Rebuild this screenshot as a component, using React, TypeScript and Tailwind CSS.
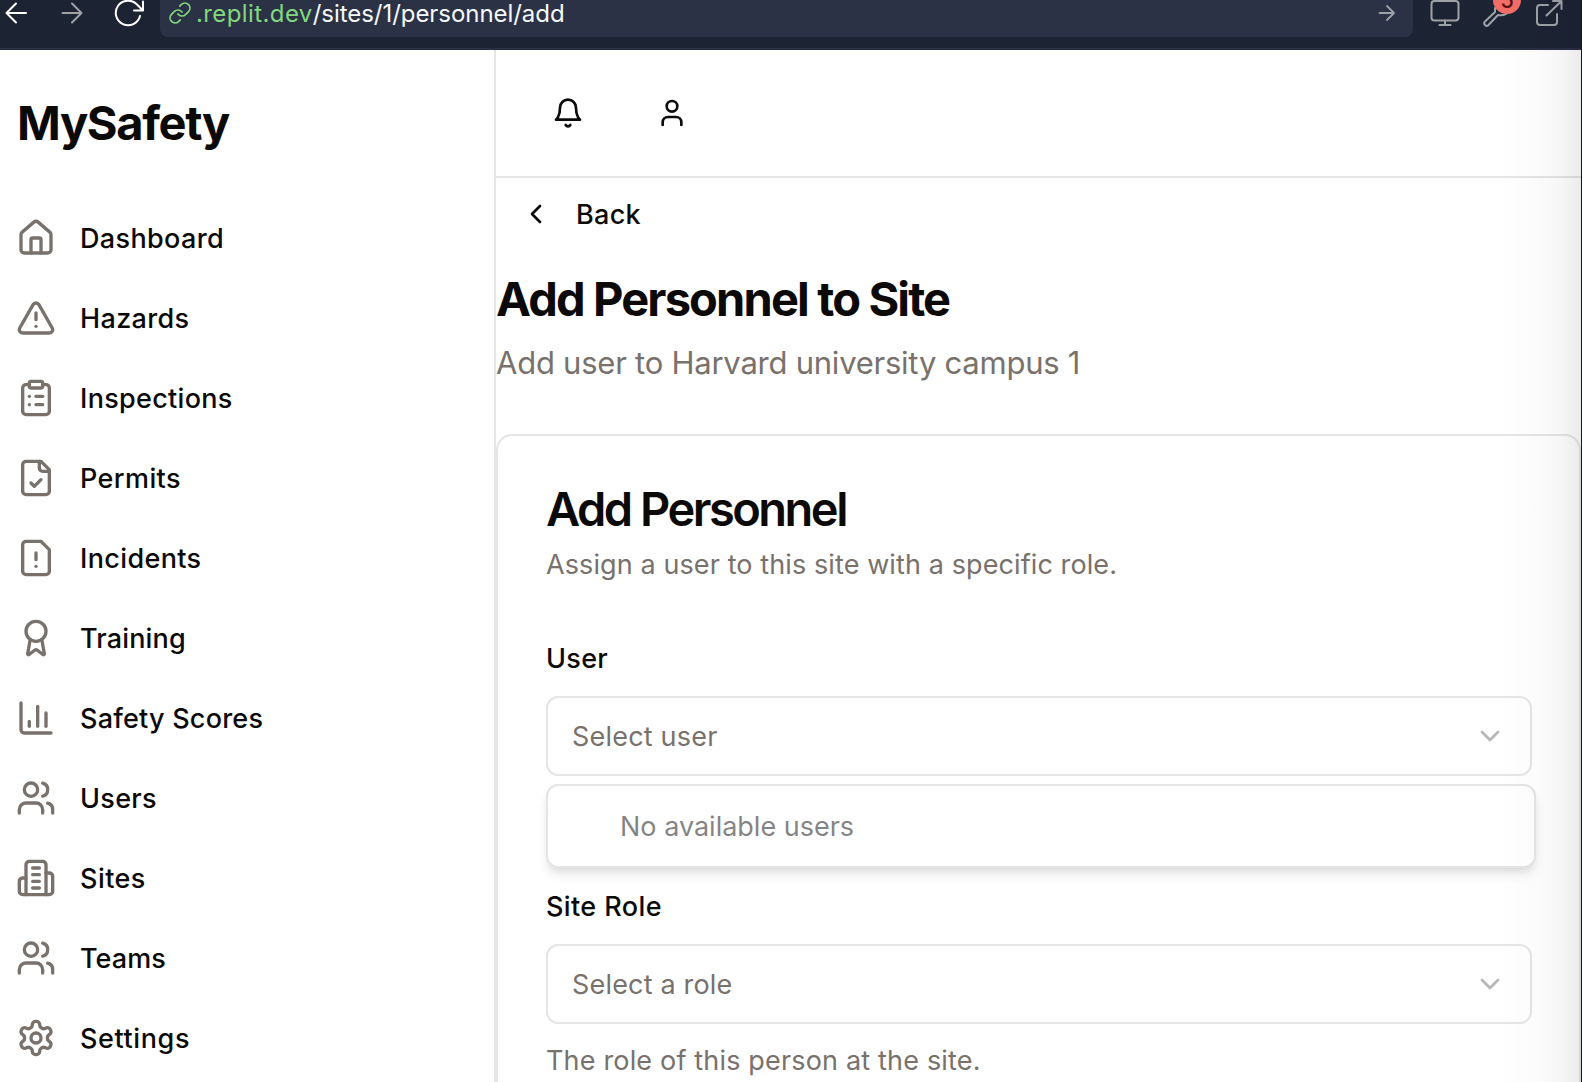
import React from "react";

type IconProps = { className?: string; strokeWidth?: number; children: React.ReactNode };

function Icon({ className, strokeWidth = 2, children }: IconProps) {
  return (
    <svg viewBox="0 0 24 24" fill="none" stroke="currentColor" strokeWidth={strokeWidth} strokeLinecap="round" strokeLinejoin="round" className={className}>
      {children}
    </svg>
  );
}

const usersIcon = (
  <>
    <path d="M16 21v-2a4 4 0 0 0-4-4H6a4 4 0 0 0-4 4v2" />
    <circle cx="9" cy="7" r="4" />
    <path d="M22 21v-2a4 4 0 0 0-3-3.87" />
    <path d="M16 3.13a4 4 0 0 1 0 7.75" />
  </>
);

const navItems = [
  {
    label: "Dashboard",
    text: "tracking-[0.35px]",
    icon: (
      <>
        <path d="M15 21v-8a1 1 0 0 0-1-1h-4a1 1 0 0 0-1 1v8" />
        <path d="M3 10a2 2 0 0 1 .709-1.528l7-5.999a2 2 0 0 1 2.582 0l7 5.999A2 2 0 0 1 21 10v9a2 2 0 0 1-2 2H5a2 2 0 0 1-2-2z" />
      </>
    ),
  },
  {
    label: "Hazards",
    text: "tracking-[0.35px]",
    icon: (
      <>
        <path d="m21.73 18-8-14a2 2 0 0 0-3.48 0l-8 14A2 2 0 0 0 4 21h16a2 2 0 0 0 1.73-3" />
        <path d="M12 9v4" />
        <path d="M12 17h.01" />
      </>
    ),
  },
  {
    label: "Inspections",
    text: "tracking-[0.3px]",
    icon: (
      <>
        <rect width="8" height="4" x="8" y="2" rx="1" ry="1" />
        <path d="M16 4h2a2 2 0 0 1 2 2v14a2 2 0 0 1-2 2H6a2 2 0 0 1-2-2V6a2 2 0 0 1 2-2h2" />
        <path d="M12 11h4" />
        <path d="M12 16h4" />
        <path d="M8 11h.01" />
        <path d="M8 16h.01" />
      </>
    ),
  },
  {
    label: "Permits",
    text: "tracking-[0.4px]",
    icon: (
      <>
        <path d="M15 2H6a2 2 0 0 0-2 2v16a2 2 0 0 0 2 2h12a2 2 0 0 0 2-2V7Z" />
        <path d="M14 2v4a2 2 0 0 0 2 2h4" />
        <path d="m9 15 2 2 4-4" />
      </>
    ),
  },
  {
    label: "Incidents",
    text: "tracking-[0.35px]",
    icon: (
      <>
        <path d="M15 2H6a2 2 0 0 0-2 2v16a2 2 0 0 0 2 2h12a2 2 0 0 0 2-2V7Z" />
        <path d="M12 9v4" />
        <path d="M12 17h.01" />
      </>
    ),
  },
  {
    label: "Training",
    text: "tracking-[0.15px]",
    icon: (
      <>
        <path d="m15.477 12.89 1.515 8.526a.5.5 0 0 1-.81.47l-3.58-2.687a1 1 0 0 0-1.197 0l-3.586 2.686a.5.5 0 0 1-.81-.469l1.514-8.526" />
        <circle cx="12" cy="8" r="6" />
      </>
    ),
  },
  {
    label: "Safety Scores",
    text: "tracking-[0.22px]",
    icon: (
      <>
        <path d="M3 3v16a2 2 0 0 0 2 2h16" />
        <path d="M18 17V9" />
        <path d="M13 17V5" />
        <path d="M8 17v-3" />
      </>
    ),
  },
  { label: "Users", text: "tracking-[0.3px]", icon: usersIcon },
  {
    label: "Sites",
    text: "tracking-[0.45px]",
    icon: (
      <>
        <path d="M6 22V4a2 2 0 0 1 2-2h8a2 2 0 0 1 2 2v18Z" />
        <path d="M6 12H4a2 2 0 0 0-2 2v6a2 2 0 0 0 2 2h2" />
        <path d="M18 9h2a2 2 0 0 1 2 2v9a2 2 0 0 1-2 2h-2" />
        <path d="M10 6h4" />
        <path d="M10 10h4" />
        <path d="M10 14h4" />
        <path d="M10 18h4" />
      </>
    ),
  },
  { label: "Teams", text: "tracking-[0.1px]", icon: usersIcon },
  {
    label: "Settings",
    text: "tracking-[0.6px]",
    icon: (
      <>
        <path d="M12.22 2h-.44a2 2 0 0 0-2 2v.18a2 2 0 0 1-1 1.73l-.43.25a2 2 0 0 1-2 0l-.15-.08a2 2 0 0 0-2.73.73l-.22.38a2 2 0 0 0 .73 2.73l.15.1a2 2 0 0 1 1 1.72v.51a2 2 0 0 1-1 1.74l-.15.09a2 2 0 0 0-.73 2.73l.22.38a2 2 0 0 0 2.73.73l.15-.08a2 2 0 0 1 2 0l.43.25a2 2 0 0 1 1 1.73V20a2 2 0 0 0 2 2h.44a2 2 0 0 0 2-2v-.18a2 2 0 0 1 1-1.73l.43-.25a2 2 0 0 1 2 0l.15.08a2 2 0 0 0 2.73-.73l.22-.39a2 2 0 0 0-.73-2.73l-.15-.08a2 2 0 0 1-1-1.74v-.5a2 2 0 0 1 1-1.74l.15-.09a2 2 0 0 0 .73-2.73l-.22-.38a2 2 0 0 0-2.73-.73l-.15.08a2 2 0 0 1-2 0l-.43-.25a2 2 0 0 1-1-1.73V4a2 2 0 0 0-2-2z" />
        <circle cx="12" cy="12" r="3" />
      </>
    ),
  },
];

function BrowserBar() {
  return (
    <div className="relative flex h-[50px] shrink-0 overflow-hidden border-b-2 border-[#2b2d42] bg-[#1c2333]">
      <svg className="h-[48px] w-[160px] shrink-0" viewBox="0 0 160 48" fill="none" strokeWidth="2" strokeLinecap="round" strokeLinejoin="round">
        <path d="M26 13H6.500M16 3.500L6.500 13l9.500 9.500" stroke="#fff" />
        <path d="M62.500 13H81.500M72 3.500L81.500 13L72 22.500" stroke="#a0a2a8" />
        <path d="M140 16A12.300 12.300 0 1 1 137 4.500L143 10.500M143 1.500V10.500H134" stroke="#fff" />
      </svg>
      <div className="flex h-[37px] w-[1253px] items-start rounded-b-lg bg-[#2b3245]">
        <svg className="ml-[8px] mt-[1px] h-[24px] w-[24px] shrink-0" viewBox="0 0 24 24" fill="none" stroke="#83d77f" strokeWidth="1.700" strokeLinecap="round" strokeLinejoin="round">
          <path d="M10 13a5 5 0 0 0 7.540.540l3-3a5 5 0 0 0-7.070-7.070l-1.720 1.710" />
          <path d="M14 11a5 5 0 0 0-7.540-.540l-3 3a5 5 0 0 0 7.070 7.070l1.710-1.710" />
        </svg>
        <div className="ml-[4px] mt-[-2px] flex-1 whitespace-nowrap text-[24px] leading-8 tracking-[-0.05px] text-[#f5f9fc]">
          <span className="tracking-[0.4px] text-[#83d77f]">.replit.dev</span>/sites/1/personnel/add
        </div>
        <svg className="mr-[17px] mt-[4px] h-[18px] w-[18px]" viewBox="0 0 18 18" fill="none" stroke="#9da2a6" strokeWidth="1.800" strokeLinecap="round" strokeLinejoin="round">
          <path d="M1.500 9H16M9 2L16 9L9 16" />
        </svg>
      </div>
      <svg className="h-[48px] w-[168px] shrink-0" viewBox="1413 0 168 48" fill="none" stroke="#9da2a6" strokeWidth="2" strokeLinecap="round" strokeLinejoin="round">
        <rect x="1431.500" y="1" width="27" height="19.500" rx="3" />
        <path d="M1445 20.500V25M1439.500 25H1450.500" />
        <path d="M1495 8V12L1485 21.500A2 2 0 0 0 1488.500 25L1498 15C1503 16 1507 14 1509 11" />
        <path d="M1548 5H1540A3 3 0 0 0 1537 8V22A3 3 0 0 0 1540 25H1554A3 3 0 0 0 1557 22V14M1546.500 15.500L1561 1.500M1553 1H1561.500V9" />
      </svg>
      <div className="absolute left-[1493px] top-[-14px] flex h-[28px] w-[28px] items-center justify-center rounded-full bg-[#f26d68] text-[22px] font-medium leading-none text-[#5c0f0d]">5</div>
    </div>
  );
}

function SelectBox({ text, className }: { text: string; className: string }) {
  return (
    <div className="flex h-20 w-[986px] items-center justify-between rounded-[12px] border-2 border-[#e5e5e5] px-6">
      <span className={className}>{text}</span>
      <Icon className="h-8 w-8 text-[#78716c] opacity-50">
        <path d="m6 9 6 6 6-6" />
      </Icon>
    </div>
  );
}

export default function App() {
  return (
    <div className="relative flex h-[1082px] w-[1582px] flex-col overflow-hidden bg-white font-['Inter',sans-serif] text-[#0c0a09]">
      <BrowserBar />
      <div className="flex min-h-0 flex-1">
        <aside className="w-[496px] shrink-0 border-r-2 border-[#e5e5e5]">
          <div className="flex h-[148px] items-center pb-[3px] pl-[17px]">
            <h1 className="text-[47px] font-bold leading-none tracking-[-1.35px]">MySafety</h1>
          </div>
          <nav>
            {navItems.map((item) => (
              <a key={item.label} className="flex h-20 items-center gap-6 pl-4">
                <Icon className="h-10 w-10 shrink-0 text-[#78716c]">{item.icon}</Icon>
                <span className={`pt-[2px] text-[27px] font-medium leading-10 ${item.text}`}>{item.label}</span>
              </a>
            ))}
          </nav>
        </aside>

        <main className="flex w-[1086px] flex-col">
          <header className="flex h-[128px] shrink-0 items-center gap-6 border-b-2 border-[#e5e5e5] pl-8">
            <div className="flex h-20 w-20 items-center justify-center">
              <Icon className="h-8 w-8">
                <path d="M6 8a6 6 0 0 1 12 0c0 7 3 9 3 9H3s3-2 3-9" />
                <path d="M10.300 21a1.940 1.940 0 0 0 3.400 0" />
              </Icon>
            </div>
            <div className="flex h-20 w-20 items-center justify-center">
              <Icon className="h-8 w-8">
                <path d="M19 21v-2a4 4 0 0 0-4-4H9a4 4 0 0 0-4 4v2" />
                <circle cx="12" cy="7" r="4" />
              </Icon>
            </div>
          </header>

          <div className="flex h-[72px] shrink-0 items-center gap-6 pl-6">
            <Icon className="h-8 w-8">
              <path d="m15 18-6-6 6-6" />
            </Icon>
            <span className="pt-[2px] text-[27px] font-medium leading-10 tracking-[0.3px]">Back</span>
          </div>

          <div className="h-[184px] shrink-0 pt-[21px]">
            <h2 className="text-[47px] font-bold leading-[56px] tracking-[-1.85px]">Add Personnel to Site</h2>
            <p className="mt-[12px] text-[31px] leading-[48px] tracking-[-0.24px] text-[#78716c]">Add user to Harvard university campus 1</p>
          </div>

          <section className="h-[760px] w-[1085px] shrink-0 rounded-[16px] border-2 border-[#e5e5e5] pl-12">
            <h3 className="mt-[49px] text-[47px] font-semibold leading-[48px] tracking-[-2.5px]">Add Personnel</h3>
            <p className="mt-[12px] text-[27px] leading-10 tracking-[0.1px] text-[#78716c]">Assign a user to this site with a specific role.</p>
            <label className="mt-[60px] block text-[27px] font-medium leading-[28px] tracking-[0.3px]">User</label>
            <div className="relative mt-[23px]">
              <SelectBox text="Select user" className="pt-[2px] text-[27px] leading-10 tracking-[0.2px] text-[#78716c]" />
              <div className="absolute left-0 top-[88px] flex h-[84px] w-[990px] items-center rounded-[12px] border-2 border-[#e5e5e5] bg-white pl-[72px] shadow-[0_8px_12px_-2px_rgba(0,0,0,0.1),0_4px_8px_-4px_rgba(0,0,0,0.1)]">
                <span className="pt-[1px] text-[27px] leading-10 opacity-50">No available users</span>
              </div>
            </div>
            <label className="mt-[117px] block text-[27px] font-medium leading-[28px] tracking-[0.4px]">Site Role</label>
            <div className="mt-[23px]">
              <SelectBox text="Select a role" className="pt-[2px] text-[27px] leading-10 tracking-[0.18px] text-[#78716c]" />
            </div>
            <p className="mt-[17px] text-[27px] leading-10 tracking-[0.17px] text-[#78716c]">The role of this person at the site.</p>
          </section>
        </main>
      </div>
      <div className="pointer-events-none absolute bottom-0 right-0 top-0 w-[84px] border-r border-[#0e1525] bg-[linear-gradient(to_right,rgba(0,0,0,0)_0%,rgba(0,0,0,0.01)_40%,rgba(0,0,0,0.035)_75%,rgba(0,0,0,0.08)_100%)]" />
    </div>
  );
}
